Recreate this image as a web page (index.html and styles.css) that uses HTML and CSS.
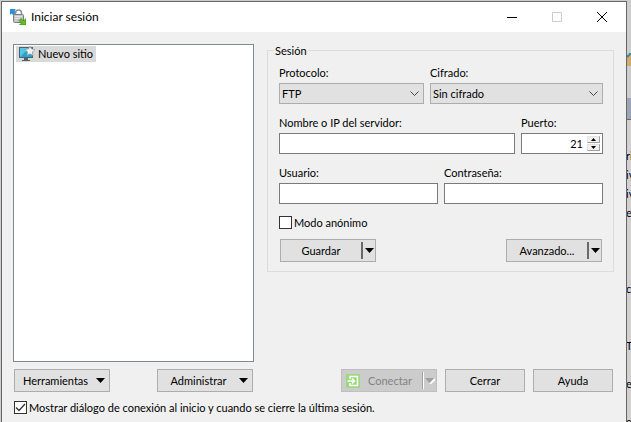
FILE: index.html
```
<!DOCTYPE html>
<html lang="es">
<head>
<meta charset="utf-8">
<title>Iniciar sesión</title>
<link rel="stylesheet" href="styles.css">
</head>
<body>
<div class="desktop">
<main class="dialog">
  <header class="titlebar">
    <svg class="app-icon" width="16" height="16" viewBox="0 0 16 16">
      <path d="M0 0h6L4.500 1.500l2 2-3 3-2-2L0 6z" fill="#2d8fd5"/>
      <path d="M5.500 6V4a3 3 0 0 1 6 0v2" fill="none" stroke="#8b929a" stroke-width="1.500"/>
      <rect x="3.500" y="5.500" width="10" height="8" rx="1" fill="#c3c6ca" stroke="#777d85"/>
      <path d="M5 7.500h7M5 9.500h6" stroke="#e2e4e6"/>
      <path d="M16 16H9.500l2-2L9 11.500 11 9.500l2.500 2.500L16 9.500z" fill="#6abf20" stroke="#3c8a12" stroke-width=".8"/>
    </svg>
    <h1>Iniciar sesión</h1>
    <div class="window-buttons">
      <button type="button" aria-label="Minimizar"><svg width="10" height="10"><path d="M0 5.500h10" stroke="#000"/></svg></button>
      <button type="button" aria-label="Maximizar" disabled><svg width="10" height="10"><path d="M.5.5h9v9h-9z" fill="none" stroke="#ccc"/></svg></button>
      <button type="button" aria-label="Cerrar ventana"><svg width="10" height="10"><path d="M0 0l10 10M10 0L0 10" stroke="#000"/></svg></button>
    </div>
  </header>

  <form class="content">
    <ul class="sites">
      <li class="site">
        <svg width="16" height="16" viewBox="0 0 16 16">
          <rect x=".5" y="1.500" width="13" height="10" fill="#20a8cf" stroke="#52616b"/>
          <path d="M1 11L10 2H1z" fill="#55c8e5"/>
          <path d="M5 12h4v2h2v1H3v-1h2z" fill="#52616b"/>
          <path d="M11 0l1.500 3 3.500.5-2.500 2.500.5 3.500-3-1.700-3 1.700.5-3.500L6 3.500 9.500 3z" fill="#f4f4f4" stroke="#8d979e" stroke-width=".7"/>
        </svg>
        Nuevo sitio
      </li>
    </ul>

    <fieldset class="session">
      <legend>Sesión</legend>
      <div class="row">
        <div class="field protocol">
          <label for="protocol">Protocolo:</label>
          <select id="protocol"><option>FTP</option></select>
        </div>
        <div class="field">
          <label for="encryption">Cifrado:</label>
          <select id="encryption"><option>Sin cifrado</option></select>
        </div>
      </div>
      <div class="row">
        <div class="field">
          <label for="host">Nombre o IP del servidor:</label>
          <input id="host" type="text">
        </div>
        <div class="field port">
          <label for="port">Puerto:</label>
          <div class="spinner">
            <input id="port" type="text" inputmode="numeric" value="21">
            <div class="steps">
              <button type="button" aria-label="Subir"><svg width="5" height="3"><path d="M0 3h5L2.500 0z"/></svg></button>
              <button type="button" aria-label="Bajar"><svg width="5" height="3"><path d="M0 0h5L2.500 3z"/></svg></button>
            </div>
          </div>
        </div>
      </div>
      <div class="row">
        <div class="field">
          <label for="user">Usuario:</label>
          <input id="user" type="text">
        </div>
        <div class="field">
          <label for="password">Contraseña:</label>
          <input id="password" type="password">
        </div>
      </div>
      <label class="check"><input type="checkbox">Modo anónimo</label>
      <div class="session-buttons">
        <div class="split">
          <button type="button">Guardar</button>
          <button type="button" class="drop" aria-label="Opciones de guardar"><svg width="9" height="5"><path d="M0 0h9L4.500 5z"/></svg></button>
        </div>
        <div class="split">
          <button type="button">Avanzado...</button>
          <button type="button" class="drop" aria-label="Opciones avanzadas"><svg width="9" height="5"><path d="M0 0h9L4.500 5z"/></svg></button>
        </div>
      </div>
    </fieldset>

    <div class="tools">
      <button type="button" class="button menu"><span>Herramientas</span><svg width="9" height="5"><path d="M0 0h9L4.500 5z"/></svg></button>
      <button type="button" class="button menu"><span>Administrar</span><svg width="9" height="5"><path d="M0 0h9L4.500 5z"/></svg></button>
    </div>
    <div class="actions">
      <div class="split off">
        <button type="submit" class="connect" disabled>
          <svg width="14" height="14" viewBox="0 0 14 14">
            <rect width="14" height="14" rx="1" fill="#9bd97c"/>
            <path d="M4 5V2.500h7.500v9H4V9M1.500 7H8M6 4.500L8.500 7 6 9.500" fill="none" stroke="#fff" stroke-width="1.500"/>
          </svg>
          Conectar
        </button>
        <button type="button" class="drop" aria-label="Opciones de conectar" disabled><svg width="10" height="6"><path d="M5 6l5-5" stroke="#fff" stroke-width="2"/><path d="M0 0h9L4.500 5z"/></svg></button>
      </div>
      <button type="button" class="button">Cerrar</button>
      <button type="button" class="button">Ayuda</button>
    </div>

    <label class="check startup"><input type="checkbox" checked>Mostrar diálogo de conexión al inicio y cuando se cierre la última sesión.</label>
  </form>
</main>

<aside class="behind">
  <div class="behind-top">
    <svg width="4" height="13"><path d="M0 4l4-4v13H0z" fill="#d1ac66"/><path d="M0 4l4-4" stroke="#2c8ca8" stroke-width="2"/></svg>
  </div>
  <div class="behind-bar"></div>
  <div class="behind-list">
    <p></p><p>ri</p><p>iv</p><p>iv</p><p>e</p><p></p><p></p><p></p><p>ct</p><p></p><p></p><p>T</p><p></p><p>e</p><p></p><p>e</p>
  </div>
</aside>
</div>
</body>
</html>
```
FILE: styles.css
```
* {
  box-sizing: border-box;
}
body {
  margin: 0;
  background: #cdcdcd;
  color: #000;
  font: 11px/14px Lato, "Noto Sans", sans-serif;
}
button, input, select {
  margin: 0;
  font: inherit;
  color: inherit;
  border-radius: 0;
}
button {
  display: flex;
  align-items: center;
  justify-content: center;
  padding: 0;
  border: 0;
  background: none;
  white-space: nowrap;
}
svg {
  flex: none;
  display: block;
}
.desktop {
  display: flex;
  height: 100vh;
  padding: 1px 0 0 1px;
  overflow: hidden;
}
.dialog {
  flex: 1;
  min-width: 0;
  border: 1px solid #666;
  border-bottom: 0;
  background: #f0f0f0;
}

/* title bar */
.titlebar {
  display: flex;
  align-items: center;
  height: 30px;
  padding: 0 2px 0 8px;
  background: #fff;
}
.titlebar h1 {
  flex: 1;
  margin: 0 0 0 5px;
  font-size: 12px;
  font-weight: normal;
  line-height: 16px;
}
.window-buttons {
  display: flex;
}
.window-buttons button {
  width: 45px;
  height: 28px;
}

/* body of the dialog */
.content {
  display: grid;
  grid-template-columns: 241px 1fr;
  column-gap: 13px;
  padding: 12px 12px 0 11px;
}
.sites {
  height: 318px;
  margin: 0;
  padding: 1px 2px;
  border: 1px solid #828790;
  background: #fff;
  list-style: none;
}
.site {
  display: flex;
  align-items: center;
  gap: 3px;
  width: 80px;
  height: 16px;
  padding-left: 3px;
  background: #d9d9d9;
  white-space: nowrap;
}
.session {
  align-self: start;
  display: flex;
  flex-direction: column;
  min-width: 0;
  margin: 0;
  padding: 9px 10px 9px 11px;
  border: 1px solid #dcdcdc;
}
.session legend {
  margin-left: -5px;
  padding: 0 1px;
  line-height: 13px;
}
.row {
  display: flex;
  gap: 6px;
  margin-bottom: 12px;
}
.field {
  flex: 1;
  display: flex;
  flex-direction: column;
  gap: 3px;
  min-width: 0;
}
.protocol {
  flex: 0 0 145px;
}
.port {
  flex: 0 0 82px;
}
.field select,
.field > input,
.spinner {
  width: 100%;
  height: 21px;
  border: 1px solid #7a7a7a;
  background: #fff;
}
.field select {
  padding: 0 2px;
  border-color: #adadad;
  appearance: none;
  background: #e1e1e1 url("data:image/svg+xml,%3Csvg xmlns='http://www.w3.org/2000/svg' width='9' height='6'%3E%3Cpath d='M.5.5l4 4 4-4' fill='none' stroke='%23444'/%3E%3C/svg%3E") no-repeat right 4px center;
}
.spinner {
  display: flex;
  padding: 2px;
}
.spinner input {
  flex: 1;
  min-width: 0;
  padding: 0 4px;
  border: 0;
  background: none;
  text-align: right;
}
.steps {
  display: flex;
  flex-direction: column;
  gap: 1px;
}
.steps button {
  width: 13px;
  height: 7px;
  border: 1px solid #a0a0a0;
  border-top-color: #e3e3e3;
  border-left-color: #e3e3e3;
  background: #f0f0f0;
}
.check {
  display: flex;
  align-items: center;
  gap: 2px;
  height: 13px;
}
.check input {
  appearance: none;
  width: 13px;
  height: 13px;
  border: 1px solid #333;
  background: #fff;
}
.check input:checked {
  background: #fff url("data:image/svg+xml,%3Csvg xmlns='http://www.w3.org/2000/svg' width='11' height='11'%3E%3Cpath d='M1 5.500l3 3 6-6.500' fill='none' stroke='%23333' stroke-width='1.300'/%3E%3C/svg%3E") no-repeat center;
}
.session-buttons {
  display: flex;
  justify-content: space-between;
  margin-top: 10px;
  padding: 0 1px;
}

/* buttons */
.button,
.split {
  width: 80px;
  height: 23px;
  border: 1px solid #adadad;
  background: #e1e1e1;
}
.split,
.menu {
  width: 96px;
}
.split {
  display: flex;
  align-items: center;
}
.split button {
  flex: 1;
}
.split .connect {
  justify-content: flex-start;
  gap: 8px;
  padding-left: 4px;
}
.split .drop {
  flex: 0 0 14px;
  height: 17px;
  border-left: 2px solid #696969;
}
.menu {
  padding-right: 4px;
}
.menu span {
  flex: 1;
}
.off {
  border-color: #bfbfbf;
  background: #ccc;
  color: #838383;
}
.off .drop {
  border-left: 1px solid #a0a0a0;
  box-shadow: inset 1px 0 #fff;
}
.off .drop path:last-child {
  fill: #a0a0a0;
}
.tools,
.actions {
  display: flex;
  margin-top: 7px;
  padding: 0 1px;
}
.tools {
  justify-content: space-between;
}
.actions {
  justify-content: flex-end;
  gap: 8px;
}
.startup {
  grid-column: 1 / -1;
  margin: 9px 0 0 1px;
}

/* window showing behind the dialog */
.behind {
  flex: 0 0 4px;
  overflow: hidden;
}
.behind-top {
  height: 97px;
  padding-top: 52px;
}
.behind-bar {
  height: 22px;
  border-bottom: 1px solid #666;
  background: #9aa5b5;
}
.behind-list {
  padding-top: 7px;
  background: #d4d0d0;
}
.behind-list p {
  height: 19px;
  margin: 0;
  line-height: 19px;
  text-indent: -1px;
}
```
